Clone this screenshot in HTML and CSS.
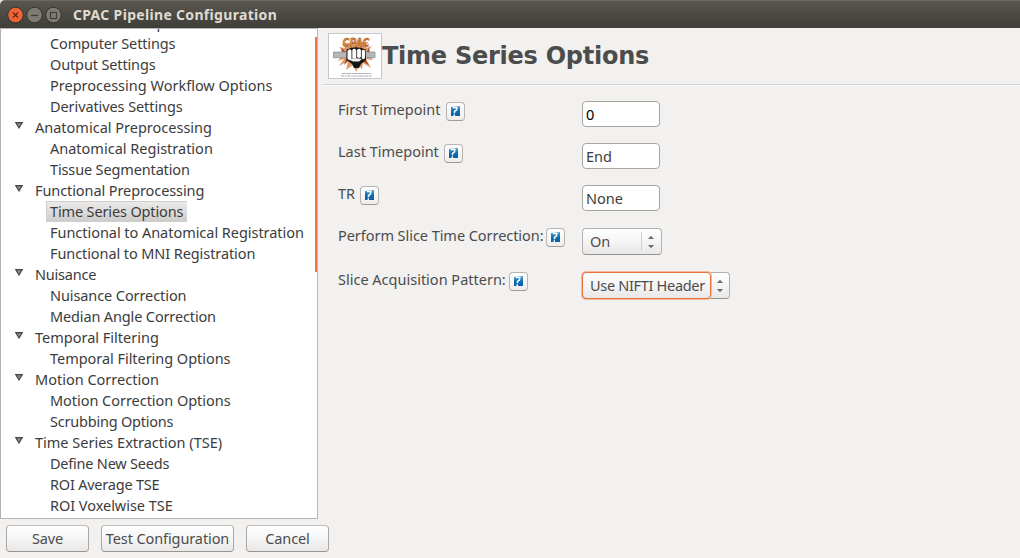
FILE: index.html
```html
<!DOCTYPE html>
<html lang="en">
<head>
<meta charset="utf-8">
<title>CPAC Pipeline Configuration</title>
<link rel="stylesheet" href="styles.css">
</head>
<body>
<svg width="0" height="0" class="defs">
  <defs>
    <linearGradient id="blue" x1="0" y1="0" x2="0" y2="1"><stop offset="0" stop-color="#59a3d1"/><stop offset=".5" stop-color="#0b70b5"/><stop offset="1" stop-color="#0b5c9d"/></linearGradient>
    <symbol id="help" viewBox="0 0 11 11">
      <path d="M1 1L10 0V10H1Z" fill="url(#blue)"/>
      <path d="M2.800 1.500H6.800L6.400 4L4.500 5.400V7.300M4.300 8.300V10" fill="none" stroke="#fff" stroke-width="1.500"/>
    </symbol>
    <symbol id="tri" viewBox="0 0 8 7"><path d="M.7.6H7.3L4 6Z" fill="#888" stroke="#444" stroke-width="1.1"/></symbol>
    <symbol id="updown" viewBox="0 0 6 14"><path d="M0 4L3 .8L6 4ZM0 10L3 13.2L6 10Z" fill="#6d6d6d"/></symbol>
  </defs>
</svg>
<div class="window">
  <header class="titlebar">
    <svg class="controls" width="56" height="18" viewBox="0 0 56 18">
      <circle cx="9.500" cy="9" r="7.8" fill="#ee6237" stroke="#36332d"/>
      <path d="M7 6.5L12 11.5M12 6.5L7 11.5" stroke="#652713" stroke-width="1.3"/>
      <circle cx="28.500" cy="9" r="7.8" fill="#7e7b73" stroke="#36332d"/>
      <path d="M25 9.500H32" stroke="#3c3b37" stroke-width="1.2"/>
      <circle cx="47.500" cy="9" r="7.8" fill="#7e7b73" stroke="#36332d"/>
      <rect x="44.500" y="6.500" width="6" height="6" fill="none" stroke="#3c3b37" stroke-width="1.1"/>
    </svg>
    <span class="window-title">CPAC Pipeline Configuration</span>
  </header>
  <div class="body">
    <aside class="sidebar">
      <nav class="tree">
        <ul class="rows">
          <li class="group"><span>Environment Setup</span></li>
          <li class="snug-3"><span>Computer Settings</span></li>
          <li class="snug-3"><span>Output Settings</span></li>
          <li><span>Preprocessing Workflow Options</span></li>
          <li class="snug-2"><span>Derivatives Settings</span></li>
          <li class="group"><svg class="tri"><use href="#tri"/></svg><span>Anatomical Preprocessing</span></li>
          <li><span>Anatomical Registration</span></li>
          <li class="snug-3"><span>Tissue Segmentation</span></li>
          <li class="group snug-2"><svg class="tri"><use href="#tri"/></svg><span>Functional Preprocessing</span></li>
          <li class="selected snug-3"><span>Time Series Options</span></li>
          <li class="snug-1"><span>Functional to Anatomical Registration</span></li>
          <li class="snug-2"><span>Functional to MNI Registration</span></li>
          <li class="group snug-4"><svg class="tri"><use href="#tri"/></svg><span>Nuisance</span></li>
          <li class="snug-2"><span>Nuisance Correction</span></li>
          <li class="snug-3"><span>Median Angle Correction</span></li>
          <li class="group"><svg class="tri"><use href="#tri"/></svg><span>Temporal Filtering</span></li>
          <li class="snug-1"><span>Temporal Filtering Options</span></li>
          <li class="group"><svg class="tri"><use href="#tri"/></svg><span>Motion Correction</span></li>
          <li class="snug-1"><span>Motion Correction Options</span></li>
          <li class="snug-4"><span>Scrubbing Options</span></li>
          <li class="group"><svg class="tri"><use href="#tri"/></svg><span>Time Series Extraction (TSE)</span></li>
          <li class="snug-4"><span>Define New Seeds</span></li>
          <li class="snug-4"><span>ROI Average TSE</span></li>
          <li class="snug-1"><span>ROI Voxelwise TSE</span></li>
        </ul>
        <div class="scroll-thumb"></div>
      </nav>
      <footer class="actions">
        <button class="btn save">Save</button>
        <button class="btn test">Test Configuration</button>
        <button class="btn cancel">Cancel</button>
      </footer>
    </aside>
    <main class="page">
      <div class="heading">
        <svg class="logo" width="54" height="46" viewBox="0 0 54 46">
          <rect x=".5" y=".5" width="53" height="45" fill="#fff" stroke="#c4c7cd"/>
          <path d="M16 10L40 9L38 15L44 13L39 19L45 27L38 26L43 35L35 30L34 36L31 33L28 39L25 32L18 37L20 28L11 33L16 26L10 28L16 19L11 14L17 15Z" fill="#e39a6b"/>
          <path d="M13 15L18 19L14 20ZM41 15L38 20H42ZM18 26L16 32L21 27ZM37 26L41 32L36 29Z" fill="#a14a22"/>
          <path d="M5.500 19H47V24.700H5.500Z" fill="#b4b6b8" stroke="#85878a" stroke-width=".7"/>
          <path d="M18.500 16.500Q28 12 37.500 16.500L38 27L33 31L31 35H26L24 31L18.500 27Z" fill="#151515"/>
          <path d="M19.500 18Q21 15 23.500 17.500V26Q21 28.500 19.500 25.500ZM24.300 17Q26 14.500 28.300 17V25Q26 26.500 24.300 25ZM29.100 17Q31 14.500 32.900 17V24Q31 26 29.100 24ZM33.700 17.500Q36 16 37 18V25Q35.500 27.500 33.700 25Z" fill="#fff"/>
          <path d="M21 26.500Q27 24.500 34 26L31 28.500H25Z" fill="#f3f3f3"/>
          <text x="14.500" y="14.300" class="logo-word" textLength="27" lengthAdjust="spacingAndGlyphs">CPAC</text>
          <path d="M14 40.500H43M13 43H44" stroke="#a5a8ad" stroke-width="1.200" stroke-dasharray="3 .6 2 .5"/>
        </svg>
        <h1>Time Series Options</h1>
      </div>
      <div class="form">
        <div class="label l1"><span>First Timepoint</span><button class="help"><svg><use href="#help"/></svg></button></div>
        <div class="field active">0</div>
        <div class="label l2"><span>Last Timepoint</span><button class="help"><svg><use href="#help"/></svg></button></div>
        <div class="field">End</div>
        <div class="label l3"><span>TR</span><button class="help"><svg><use href="#help"/></svg></button></div>
        <div class="field">None</div>
        <div class="label l4"><span>Perform Slice Time Correction:</span><button class="help"><svg><use href="#help"/></svg></button></div>
        <div class="choice on"><span class="value">On</span><svg class="arrows"><use href="#updown"/></svg></div>
        <div class="label l5"><span>Slice Acquisition Pattern:</span><button class="help"><svg><use href="#help"/></svg></button></div>
        <div class="choice nifti"><span class="value">Use NIFTI Header</span><svg class="arrows"><use href="#updown"/></svg></div>
      </div>
    </main>
  </div>
</div>
</body>
</html>
```
FILE: styles.css
```css
* { box-sizing: border-box; }
body { margin: 0; background: #f2f1f0; color: #4c4c4c; font: 14.500px/21px "Noto Sans", sans-serif; }
.defs { position: absolute; }
.window { width: 1020px; height: 558px; display: flex; flex-direction: column; overflow: hidden; }
.titlebar { height: 28px; flex: none; display: flex; align-items: center; padding-left: 6px; gap: 11px; background: linear-gradient(#59574f, #3e3d38); border-top: 1px solid #6a6860; border-radius: 5px 0 0 0; }
.window-title { font-size: 14px; font-weight: 700; letter-spacing: .32px; color: #dfdbd2; white-space: nowrap; }
.body { display: flex; flex: 1; min-height: 0; }
.sidebar { width: 318px; flex: none; }
.tree { position: relative; height: 491px; background: #fff; border: 1px solid #b9b5b1; border-left-color: #b8b0aa; overflow: hidden; color: #3c3c3c; }
.rows { list-style: none; margin: -17px 0 0; padding: 0; }
.rows li { height: 21px; padding-left: 49px; display: flex; white-space: nowrap; }
.rows .group { padding-left: 34px; }
.rows .tri { width: 8px; height: 7px; margin: 5px 8px 0 -20px; }
.rows .tri + span { margin-left: 4px; }
.snug-1 { letter-spacing: -.04px; }
.snug-2 { letter-spacing: -.09px; }
.snug-3 { letter-spacing: -.14px; }
.snug-4 { letter-spacing: -.22px; }
.rows .selected { padding-left: 45px; }
.selected span { height: 21px; width: 141px; padding-left: 3px; background: linear-gradient(#ebeae9, #cfcdcb); border: 1px solid #d0cecc; border-right: 0; line-height: 19px; }
.scroll-thumb { position: absolute; top: 8px; right: -1px; width: 3px; height: 235px; background: #f07746; }
.actions { display: flex; padding: 6px 0 0 6px; gap: 12px; }
.btn { flex: none; height: 27px; padding: 0 0 2px; border: 1px solid #aaa7a4; border-top-color: #c2bfbc; border-bottom-color: #999693; border-radius: 4px; background: linear-gradient(#fff, #f6f5f5 50%, #e9e8e7); color: #4c4c4c; font: 14.500px/20px "Noto Sans", sans-serif; letter-spacing: -.1px; white-space: nowrap; }
.save, .cancel { width: 83px; }
.test { width: 133px; }
.page { flex: 1; padding-left: 5px; }
.heading { height: 57px; display: flex; align-items: flex-start; padding: 5px 0 0 5px; border-bottom: 1px solid #d5d3d1; box-shadow: 0 1px #fafafa; }
.logo { flex: none; }
.logo-word { font: italic 700 11.500px "DejaVu Sans", sans-serif; fill: #e39345; stroke: #7a3a1b; stroke-width: .4px; }
h1 { margin: 5px 0 0; font: 700 24px/36px "DejaVu Sans", sans-serif; letter-spacing: -.26px; color: #4c4c4c; white-space: nowrap; }
.form { display: grid; grid-template-columns: 244px 1fr; grid-template-rows: 42px 42px 42px 44px 30px; align-items: start; padding: 16px 0 0 15px; }
.label { display: flex; align-items: flex-start; gap: 5px; white-space: nowrap; margin-top: -2px; }
.l1 { gap: 6px; }
.l4 { gap: 2px; letter-spacing: -.05px; }
.l5 { gap: 3px; }
.help { width: 19px; height: 19px; margin: 3px 0 0; padding: 3px; border: 1px solid #b7b4b1; border-bottom-color: #9e9b98; border-radius: 4px; background: linear-gradient(#fff, #eeedec); }
.help svg { display: block; width: 11px; height: 11px; }
.field { width: 78px; height: 26px; padding-left: 3px; line-height: 25px; background: #fff; border: 1px solid #a9a6a2; border-radius: 4px; color: #3c3c3c; }
.active { color: #000; }
.choice { display: flex; align-items: center; height: 27px; margin-top: 1px; border: 1px solid #b3b0ad; border-bottom-color: #95928f; border-radius: 4px; background: linear-gradient(#fff, #f6f5f5 50%, #e9e8e7); white-space: nowrap; }
.on { width: 80px; }
.on .value { width: 59px; height: 19px; padding-left: 7px; line-height: 19px; border-right: 1px solid #d2d0ce; }
.nifti { width: 148px; }
.nifti .value { width: 129px; height: 27px; flex: none; margin-left: -1px; padding-left: 7px; line-height: 25px; letter-spacing: -.31px; border: 1px solid #e9733f; border-radius: 4px; box-shadow: 0 0 0 1px #f6b99e; }
.arrows { width: 6px; height: 14px; margin-left: 6px; }
.nifti .arrows { margin-left: 6px; }
```
